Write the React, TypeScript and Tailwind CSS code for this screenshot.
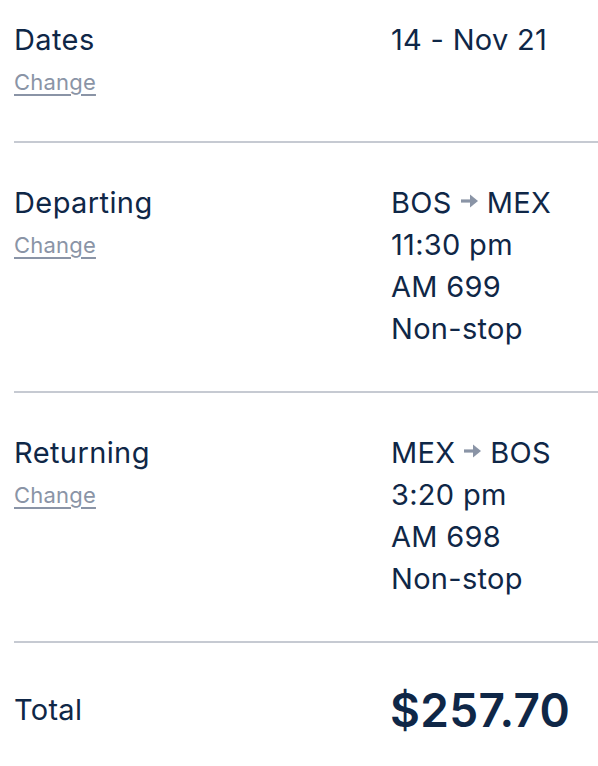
import React from "react";

/* ── Trip summary ── */
interface Section {
  label: string;
  lines: React.ReactNode[];
  change?: boolean;
}

function Arrow() {
  return (
    <svg width="19" height="14" viewBox="0 0 19 14" className="mx-[8px] inline-block -translate-y-[4px]">
      <path d="M1 7h12" stroke="#8a94a6" strokeWidth="3.2" />
      <path d="M10 0.5l8 6.5-8 6.5z" fill="#8a94a6" />
    </svg>
  );
}

const sections: Section[] = [
  { label: "Dates", lines: ["14 - Nov 21"], change: true },
  {
    label: "Departing",
    lines: [
      <span key="r">BOS<Arrow />MEX</span>,
      "11:30 pm",
      "AM 699",
      "Non-stop",
    ],
    change: true,
  },
  {
    label: "Returning",
    lines: [
      <span key="r">MEX<Arrow />BOS</span>,
      "3:20 pm",
      "AM 698",
      "Non-stop",
    ],
    change: true,
  },
];

export default function App() {
  return (
    <div
      className="w-[598px] h-[766px] bg-white overflow-hidden pl-[14px] text-[#0f2747]"
      style={{ fontFamily: "Inter, 'Liberation Sans', sans-serif" }}
    >
      {sections.map((s, i) => (
        <div
          key={s.label}
          className={
            "flex border-b-2 border-[#c6cad2] pb-[41px] " + (i === 0 ? "pt-[19px]" : "pt-[39px]")
          }
        >
          <div className="w-[377px] shrink-0">
            <p className="text-[29px] leading-[42px] tracking-[0.4px]">{s.label}</p>
            {s.change && (
              <a href="#" className="block mt-[3px] text-[22px] leading-[36px] tracking-[0.2px] text-[#8a94a6] underline underline-offset-[4px]">
                Change
              </a>
            )}
          </div>
          <div className="text-[29px] leading-[42px] tracking-[0.3px]">
            {s.lines.map((l, j) => (
              <p key={j}>{l}</p>
            ))}
          </div>
        </div>
      ))}
      <div className="flex items-center pt-[39px]">
        <p className="w-[376px] shrink-0 text-[29px] leading-[42px] tracking-[0.3px]">Total</p>
        <p className="text-[46px] leading-[56px] font-semibold tracking-[0.3px]">$257.70</p>
      </div>
    </div>
  );
}
